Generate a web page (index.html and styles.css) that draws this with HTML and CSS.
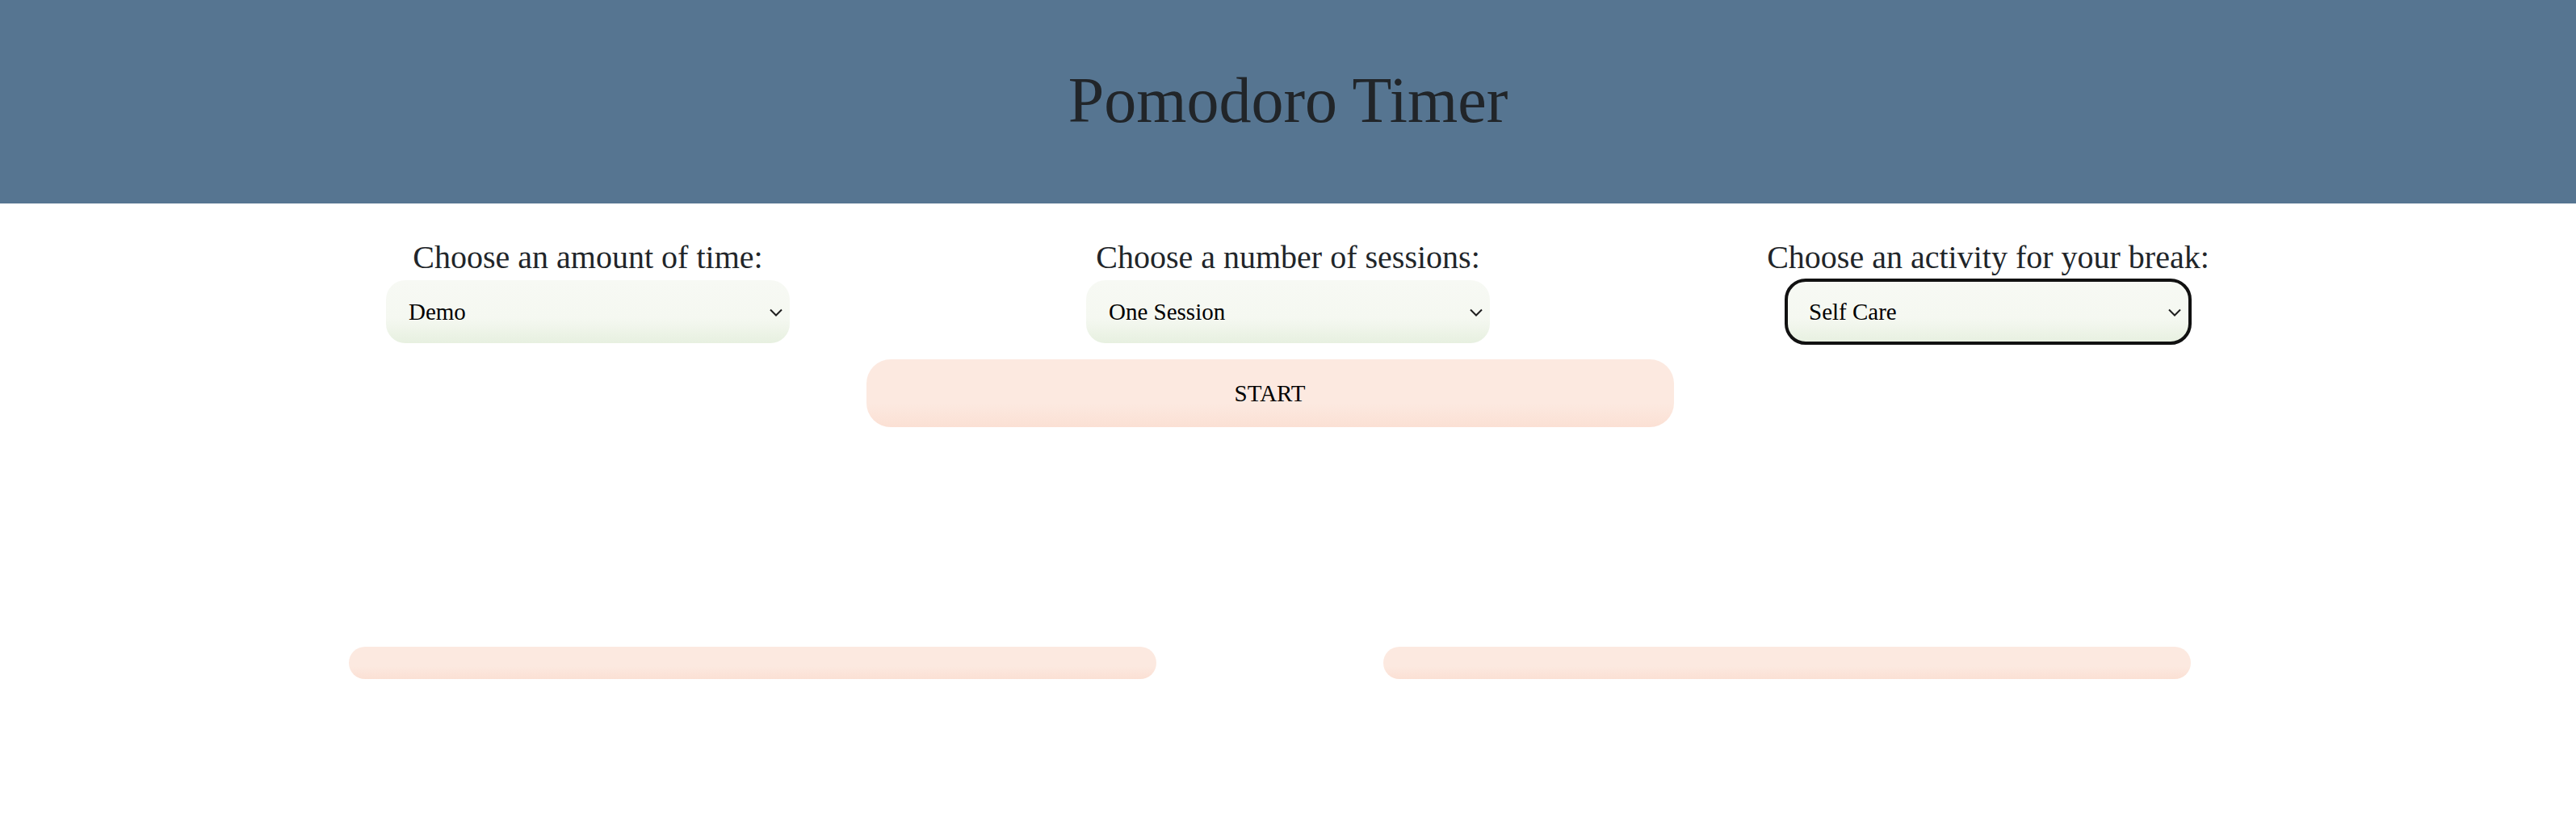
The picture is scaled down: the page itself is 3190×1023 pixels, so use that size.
FILE: index.html
```html
<!DOCTYPE html>
<html lang="en">
<head>
<meta charset="utf-8">
<title>Pomodoro Timer</title>
<link rel="stylesheet" href="styles.css">
</head>
<body>
<header class="top">
  <h1 class="title">Pomodoro Timer</h1>
</header>
<main class="page">
  <section class="options">
    <div class="option">
      <label class="opt-label" for="time">Choose an amount of time:</label>
      <div class="select-wrap">
        <select id="time" class="opt-select">
          <option>Demo</option>
          <option>25 Minutes</option>
          <option>50 Minutes</option>
        </select>
        <svg class="chev" width="16" height="10" viewBox="0 0 16 10" aria-hidden="true"><path d="M1 1.5 L8 8.5 L15 1.5" fill="none" stroke="#1e1e1e" stroke-width="2"/></svg>
      </div>
    </div>
    <div class="option">
      <label class="opt-label" for="sessions">Choose a number of sessions:</label>
      <div class="select-wrap">
        <select id="sessions" class="opt-select">
          <option>One Session</option>
          <option>Two Sessions</option>
          <option>Three Sessions</option>
        </select>
        <svg class="chev" width="16" height="10" viewBox="0 0 16 10" aria-hidden="true"><path d="M1 1.5 L8 8.5 L15 1.5" fill="none" stroke="#1e1e1e" stroke-width="2"/></svg>
      </div>
    </div>
    <div class="option">
      <label class="opt-label" for="activity">Choose an activity for your break:</label>
      <div class="select-wrap">
        <select id="activity" class="opt-select is-focused">
          <option>Self Care</option>
          <option>Exercise</option>
          <option>Snack</option>
        </select>
        <svg class="chev chev-focus" width="16" height="10" viewBox="0 0 16 10" aria-hidden="true"><path d="M1 1.5 L8 8.5 L15 1.5" fill="none" stroke="#1e1e1e" stroke-width="2"/></svg>
      </div>
    </div>
  </section>
  <section class="lower">
    <button class="start" type="button">START</button>
    <div class="bars">
      <div class="bar"></div>
      <div class="bar"></div>
    </div>
  </section>
</main>
</body>
</html>
```
FILE: styles.css
```css
html, body {
  margin: 0;
  padding: 0;
  background: #ffffff;
}

body {
  font-family: "Liberation Serif", "Times New Roman", serif;
  color: #212529;
}

.top {
  height: 252px;
  background: #567591;
  display: flex;
  align-items: center;
  justify-content: center;
  padding-bottom: 4px;
  box-sizing: border-box;
}

.title {
  margin: 0;
  font-size: 80px;
  font-weight: normal;
  color: #212529;
  line-height: normal;
}

.options {
  width: 2601px;
  margin: 44px auto 0;
  display: grid;
  grid-template-columns: repeat(3, 1fr);
}

.option {
  display: flex;
  flex-direction: column;
  align-items: center;
}

.opt-label {
  font-size: 40px;
  line-height: 46px;
  color: #212529;
}

.select-wrap {
  position: relative;
  margin-top: 5px;
  width: 500px;
  height: 78px;
}

.opt-select {
  -webkit-appearance: none;
  appearance: none;
  display: block;
  width: 500px;
  height: 78px;
  box-sizing: border-box;
  padding: 0 40px 0 28px;
  border: none;
  border-radius: 24px;
  font-family: "Liberation Serif", "Times New Roman", serif;
  font-size: 29px;
  color: #000;
  background: linear-gradient(to bottom, #f7f9f4 0%, #f5f8f1 60%, #e7f0e0 100%);
}

.opt-select.is-focused {
  outline: 4px solid #111;
  outline-offset: -2px;
}

.chev {
  position: absolute;
  right: 9px;
  top: 50%;
  margin-top: -4px;
  pointer-events: none;
}

.chev-focus {
  right: 11px;
}

.lower {
  width: 2281px;
  margin: 20px 0 0 432px;
  display: flex;
  flex-direction: column;
  align-items: center;
}

.start {
  width: 1000px;
  height: 84px;
  border: none;
  border-radius: 30px;
  font-family: "Liberation Serif", "Times New Roman", serif;
  font-size: 29px;
  color: #000;
  background: linear-gradient(to bottom, #fce9e0 0%, #fce9e0 65%, #fbe0d4 100%);
}

.bars {
  align-self: stretch;
  margin-top: 272px;
  display: flex;
  justify-content: space-between;
}

.bar {
  width: 1000px;
  height: 40px;
  border-radius: 20px;
  background: linear-gradient(to bottom, #fce9e0 0%, #fce9e0 60%, #fbe0d4 100%);
}
```
